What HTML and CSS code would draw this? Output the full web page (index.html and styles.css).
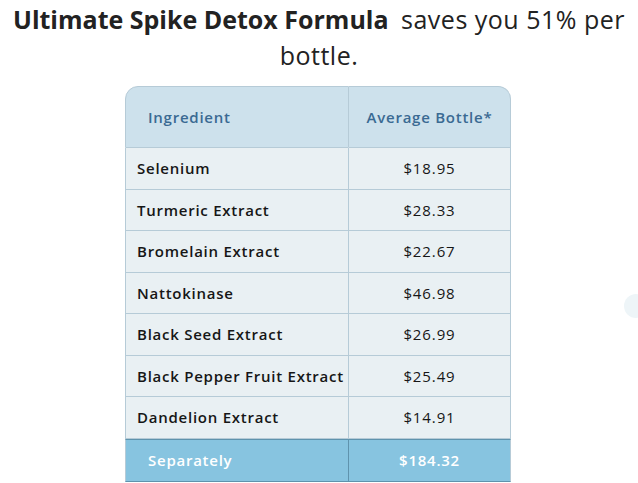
FILE: index.html
```html
<!DOCTYPE html>
<html>
<head>
<meta charset="utf-8">
<link rel="stylesheet" href="styles.css">
</head>
<body>
<div class="page">
  <p class="headline"><strong>Ultimate Spike Detox Formula</strong> <span class="light gap">saves you 51% per</span> <span class="light">bottle.</span></p>
  <table class="cost-table">
    <colgroup><col class="c1"><col class="c2"></colgroup>
    <thead>
      <tr><th class="col-name">Ingredient</th><th class="col-price">Average Bottle*</th></tr>
    </thead>
    <tbody>
      <tr><td class="col-name">Selenium</td><td class="col-price">$18.95</td></tr>
      <tr><td class="col-name">Turmeric Extract</td><td class="col-price">$28.33</td></tr>
      <tr><td class="col-name">Bromelain Extract</td><td class="col-price">$22.67</td></tr>
      <tr><td class="col-name">Nattokinase</td><td class="col-price">$46.98</td></tr>
      <tr><td class="col-name">Black Seed Extract</td><td class="col-price">$26.99</td></tr>
      <tr><td class="col-name">Black Pepper Fruit Extract</td><td class="col-price">$25.49</td></tr>
      <tr><td class="col-name">Dandelion Extract</td><td class="col-price">$14.91</td></tr>
    </tbody>
    <tfoot>
      <tr><td class="col-name">Separately</td><td class="col-price">$184.32</td></tr>
    </tfoot>
  </table>
  <div class="side-dot"></div>
</div>
</body>
</html>
```

FILE: styles.css
```css
html, body {
  margin: 0;
  padding: 0;
  background: #ffffff;
}
.page {
  position: relative;
  width: 638px;
  height: 483px;
  overflow: hidden;
  font-family: "Open Sans", "Liberation Sans", sans-serif;
  color: #1c1c1c;
}
.headline {
  margin: 0;
  padding: 1px 6px 0;
  text-align: center;
  font-size: 25px;
  line-height: 36px;
  font-weight: 400;
  color: #222;
}
.headline strong {
  font-weight: 700;
}
.headline .light {
  letter-spacing: 0.5px;
}
.headline .gap {
  margin-left: 6px;
}
.cost-table {
  margin: 13px 0 0 125px;
  width: 386px;
  table-layout: fixed;
  border-collapse: separate;
  border-spacing: 0;
  font-size: 15px;
  letter-spacing: 0.75px;
}
.cost-table col.c1 { width: 224px; }
.cost-table col.c2 { width: 162px; }
.cost-table th, .cost-table td {
  border-right: 1px solid #b6cbd7;
  border-bottom: 1px solid #b6cbd7;
}
.cost-table th:first-child, .cost-table td:first-child {
  border-left: 1px solid #b6cbd7;
}
.cost-table .col-name {
  text-align: left;
  white-space: nowrap;
}
.cost-table .col-price {
  text-align: center;
}
.cost-table thead th {
  height: 60px;
  padding: 0;
  background: #cde1ec;
  color: #3a6a93;
  font-weight: 600;
  border-top: 1px solid #b6cbd7;
}
.cost-table thead th.col-name {
  padding-left: 22px;
  border-top-left-radius: 13px;
}
.cost-table thead th.col-price {
  border-top-right-radius: 13px;
}
.cost-table tbody td {
  height: 40.5px;
  padding: 0;
  background: #e9f0f3;
  font-weight: 600;
  color: #161616;
}
.cost-table tbody td.col-name {
  padding-left: 11px;
}
.cost-table tbody td.col-price {
  font-weight: 500;
  letter-spacing: 0.9px;
}
.cost-table tfoot td {
  height: 41px;
  background: #87c4e0;
  color: #ffffff;
  font-weight: 600;
  border-color: #5f93ad;
  border-top: 1px solid #5f93ad;
  padding: 0;
}
.cost-table tfoot td.col-name {
  padding-left: 22px;
  border-left-color: #b6cbd7;
}
.cost-table tfoot td.col-price {
  border-right-color: #b6cbd7;
}
.side-dot {
  position: absolute;
  left: 624px;
  top: 294px;
  width: 24px;
  height: 24px;
  border-radius: 50%;
  background: #eef5f8;
}
```
